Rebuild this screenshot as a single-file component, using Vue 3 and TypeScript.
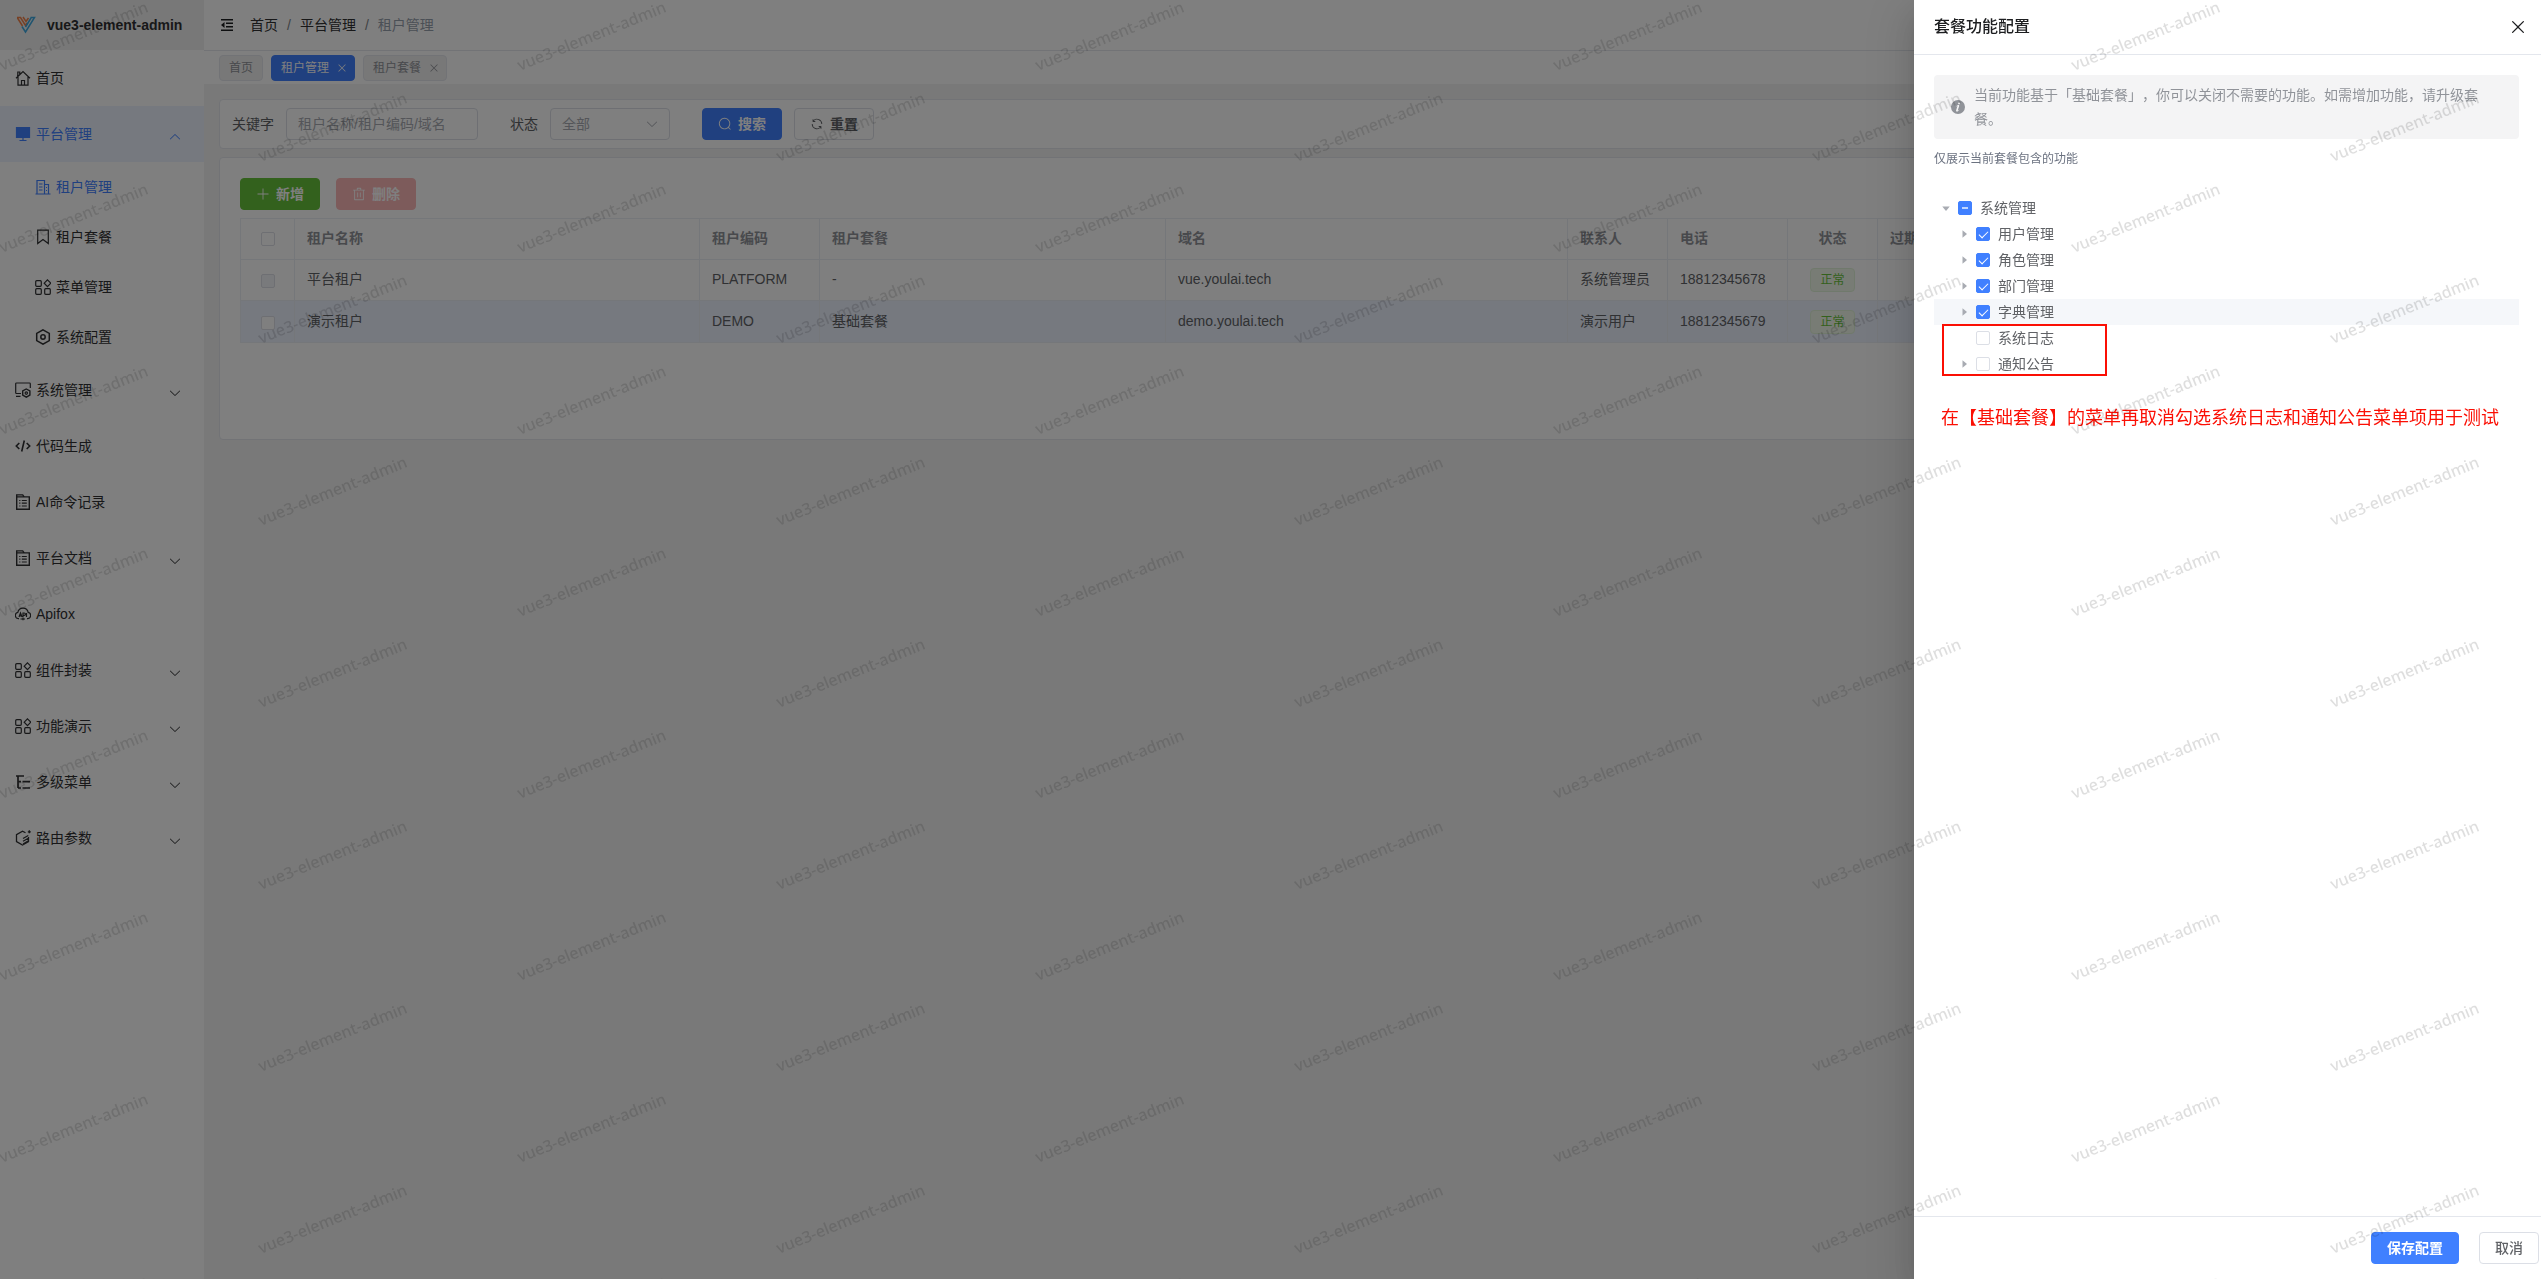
<script setup lang="ts">
import { ref } from 'vue'

interface MenuItem {
  label: string
  icon: string
  arrow?: boolean
  active?: boolean
  children?: { label: string; icon: string; active?: boolean }[]
}

const menu: MenuItem[] = [
  { label: '首页', icon: 'home' },
  {
    label: '平台管理', icon: 'monitor', arrow: true, active: true,
    children: [
      { label: '租户管理', icon: 'building', active: true },
      { label: '租户套餐', icon: 'bookmark' },
      { label: '菜单管理', icon: 'grid' },
      { label: '系统配置', icon: 'hexagon' },
    ],
  },
  { label: '系统管理', icon: 'system', arrow: true },
  { label: '代码生成', icon: 'code' },
  { label: 'AI命令记录', icon: 'document' },
  { label: '平台文档', icon: 'document', arrow: true },
  { label: 'Apifox', icon: 'api' },
  { label: '组件封装', icon: 'grid', arrow: true },
  { label: '功能演示', icon: 'grid', arrow: true },
  { label: '多级菜单', icon: 'levels', arrow: true },
  { label: '路由参数', icon: 'route', arrow: true },
]

/* Outline icons, 16 x 16 */
const icons: Record<string, string> = {
  home: '<path d="M1 8.300 8 1.500l7 6.800M3 7v8.200h10V7M2.800 6V2h2v2.200M6.500 15v-4.500h3V15" />',
  monitor: '<path fill="currentColor" d="M1.500 1.500h13v10h-13z" /><path d="M8 11.500v3M4.500 14.500h7" />',
  building: '<path d="M2 15V1.500h7.500V15M9.500 5.500h4V15M.5 15h15M4 5h3.500M4 8h3.500M4 11h3.500M11 8.500h1M11 11.500h1" />',
  bookmark: '<path d="M2.700 1.200h10.600v13.300L8 10.500l-5.300 4z" />',
  grid: '<rect x=".7" y="1.700" width="5.600" height="5.600" rx="1" /><rect x=".7" y="9.700" width="5.600" height="5.600" rx="1" /><rect x="9.700" y="9.700" width="5.600" height="5.600" rx="1" /><path d="m12.500.8 3.300 3.400-3.300 3.400-3.300-3.400z" />',
  hexagon: '<path stroke-width="1.500" d="m8 .8 6.300 3.600v7.200L8 15.200l-6.300-3.600V4.400z" /><circle cx="8" cy="8" r="2.200" stroke-width="1.500" />',
  system: '<path d="M6 11.500H1.500a.8.8 0 0 1-.8-.8V1.800A.8.8 0 0 1 1.500 1h13a.8.8 0 0 1 .8.800V6M1 14.300h4.500" /><path stroke-width="1.400" d="m11.300 7 3.600 2v4.200l-3.600 2-3.600-2V9z" /><circle cx="11.300" cy="11.100" r="1.200" />',
  code: '<path stroke-width="1.600" d="M4.300 5 1.300 8l3 3M11.700 5l3 3-3 3M9.300 2.500l-2.600 11" />',
  document: '<path stroke-width="1.400" d="M1.700 15.200V.9h6l1.500 2h5.100v12.300zM1.700 2.900h7.500" /><path d="M4.200 6.500h1.200M4.200 9.200h1.200M4.200 12h1.200M6.800 6.500h5M6.800 9.200h5M6.800 12h5" />',
  api: '<path d="M4 12.700H3.300A3.200 3.200 0 0 1 2.800 6.400 5.300 5.300 0 0 1 13.200 6.400a3.200 3.200 0 0 1-.5 6.300H12M4 11l1.500-4L7 11M4.500 9.800h2M8 11V7h1.200a1.200 1.200 0 0 1 0 2.400H8M11.500 7v4M8 11.500v2.700M5.500 13h2.500l2 0" />',
  levels: '<path stroke-width="1.700" d="M1 2h8M3 2v12M3 7.700h3M3 14h3M7.500 7.700H15M7.500 14H15" />',
  route: '<path stroke-width="1.300" d="M10.500 2.800 7.500 1.200 1.500 4.600v7l6 3.400 6-3.400V7M8 8.500l5.300-3M8 11.300l5.300-3M8 14l5-3M14.300.3v3M12.800 1.800h3" />',
}

const paths = {
  close: 'M764.288 214.592 512 466.88 259.712 214.592a31.936 31.936 0 0 0-45.12 45.12L466.752 512 214.528 764.224a31.936 31.936 0 1 0 45.12 45.184L512 557.184l252.288 252.288a31.936 31.936 0 0 0 45.12-45.12L557.12 512.064l252.288-252.352a31.936 31.936 0 1 0-45.12-45.184z',
  down: 'M831.872 340.864 512 652.672 192.128 340.864a30.592 30.592 0 0 0-42.752 0 29.12 29.12 0 0 0 0 41.6L489.664 714.24a32 32 0 0 0 44.672 0l340.288-331.712a29.12 29.12 0 0 0 0-41.728 30.592 30.592 0 0 0-42.752 0z',
  search: 'm795.904 750.72 124.992 124.928a32 32 0 0 1-45.248 45.248L750.656 795.904a416 416 0 1 1 45.248-45.248zM480 832a352 352 0 1 0 0-704 352 352 0 0 0 0 704',
  refresh: 'M771.776 794.88A384 384 0 0 1 128 512h64a320 320 0 0 0 555.712 216.448H654.72a32 32 0 1 1 0-64h149.056a32 32 0 0 1 32 32v148.928a32 32 0 1 1-64 0v-50.56zM276.288 295.616h92.992a32 32 0 0 1 0 64H220.16a32 32 0 0 1-32-32V178.56a32 32 0 0 1 64 0v50.56A384 384 0 0 1 896.128 512h-64a320 320 0 0 0-555.776-216.384z',
  plus: 'M480 480V128a32 32 0 0 1 64 0v352h352a32 32 0 1 1 0 64H544v352a32 32 0 1 1-64 0V544H128a32 32 0 0 1 0-64z',
  trash: 'M160 256H96a32 32 0 0 1 0-64h256V95.936a32 32 0 0 1 32-32h256a32 32 0 0 1 32 32V192h256a32 32 0 1 1 0 64h-64v672a32 32 0 0 1-32 32H192a32 32 0 0 1-32-32zm448-64v-64H416v64zM224 896h576V256H224zm192-128a32 32 0 0 1-32-32V416a32 32 0 0 1 64 0v320a32 32 0 0 1-32 32m192 0a32 32 0 0 1-32-32V416a32 32 0 0 1 64 0v320a32 32 0 0 1-32 32',
  caret: 'M384 192v640l384-320.064z',
  info: 'M512 64a448 448 0 1 1 0 896.064A448 448 0 0 1 512 64m67.2 275.072c33.28 0 60.288-23.104 60.288-57.344s-27.072-57.344-60.288-57.344c-33.28 0-60.16 23.104-60.16 57.344s26.88 57.344 60.16 57.344M590.912 699.2c0-6.848 2.368-24.64 1.024-34.752l-52.608 60.544c-10.88 11.456-24.512 19.392-30.912 17.28a12.992 12.992 0 0 1-8.256-14.72l87.68-276.992c7.168-35.136-12.544-67.2-54.336-71.296-44.096 0-108.992 44.736-148.48 101.504 0 6.784-1.28 23.68.064 33.792l52.544-60.608c10.88-11.328 23.552-19.328 29.952-17.152a12.8 12.8 0 0 1 7.808 16.128L388.48 728.576c-10.048 32.256 8.96 63.872 55.04 71.04 67.84 0 107.904-43.648 147.456-100.416z',
}

const tabs = [
  { label: '首页', closable: false, active: false },
  { label: '租户管理', closable: true, active: true },
  { label: '租户套餐', closable: true, active: false },
]

const tenants = [
  { name: '平台租户', code: 'PLATFORM', plan: '-', domain: 'vue.youlai.tech', contact: '系统管理员', phone: '18812345678', locked: true, current: false },
  { name: '演示租户', code: 'DEMO', plan: '基础套餐', domain: 'demo.youlai.tech', contact: '演示用户', phone: '18812345679', locked: false, current: true },
]

const granted = ref([
  { label: '用户管理', hover: false, checked: true },
  { label: '角色管理', hover: false, checked: true },
  { label: '部门管理', hover: false, checked: true },
  { label: '字典管理', hover: true, checked: true },
])
const revoked = ref([
  { label: '系统日志', leaf: true, checked: false },
  { label: '通知公告', leaf: false, checked: false },
])
</script>

<template>
  <div class="layout">
    <aside class="sidebar">
      <a class="logo" href="#">
        <svg class="logo-mark" viewBox="0 0 20 18">
          <path class="orange" d="M1 1.500h3.500l5 8 1.500-2.500M1.500 2l5 8M7 1l3 4.500L12.500 2" />
          <path class="blue" d="M14.500 1.500h4L9.500 16 6 10.500M15 2 9.500 11" />
        </svg>
        <span>vue3-element-admin</span>
      </a>
      <nav>
        <template v-for="item in menu" :key="item.label">
          <a class="menu-item" :class="{ active: item.active }" href="#">
            <svg class="menu-icon" viewBox="0 0 16 16" v-html="icons[item.icon]" />
            <span class="menu-label">{{ item.label }}</span>
            <svg v-if="item.arrow" class="menu-arrow" :class="{ open: item.active }" viewBox="0 0 1024 1024"><path :d="paths.down" /></svg>
          </a>
          <a v-for="sub in item.children" :key="sub.label" class="menu-item sub" :class="{ current: sub.active }" href="#">
            <svg class="menu-icon" viewBox="0 0 16 16" v-html="icons[sub.icon]" />
            <span class="menu-label">{{ sub.label }}</span>
          </a>
        </template>
      </nav>
    </aside>

    <div class="content">
      <header class="navbar">
        <button class="fold" type="button" aria-label="折叠菜单">
          <svg viewBox="0 0 12 12"><path d="M0 0h12v1.500H0zM5 3.500h7V5H5zM5 7h7v1.500H5zM0 10.500h12V12H0zM3.500 3v6L0 6z" /></svg>
        </button>
        <nav class="breadcrumb">
          <a href="#">首页</a><i>/</i><a href="#">平台管理</a><i>/</i><span>租户管理</span>
        </nav>
      </header>

      <div class="tabs">
        <a v-for="tab in tabs" :key="tab.label" class="tab" :class="{ active: tab.active, closable: tab.closable }" href="#">
          {{ tab.label }}
          <svg v-if="tab.closable" viewBox="0 0 1024 1024"><path :d="paths.close" /></svg>
        </a>
      </div>

      <main class="main">
        <form class="card search" @submit.prevent>
          <label for="keywords">关键字</label>
          <input id="keywords" class="field keyword" type="text" placeholder="租户名称/租户编码/域名" />
          <label class="status-label" for="status">状态</label>
          <div class="select-box">
            <select id="status" class="field"><option>全部</option></select>
            <svg viewBox="0 0 1024 1024"><path :d="paths.down" /></svg>
          </div>
          <button class="btn primary go" type="submit"><svg viewBox="0 0 1024 1024"><path :d="paths.search" /></svg>搜索</button>
          <button class="btn" type="reset"><svg viewBox="0 0 1024 1024"><path :d="paths.refresh" /></svg>重置</button>
        </form>

        <section class="card list">
          <div class="toolbar">
            <button class="btn success" type="button"><svg viewBox="0 0 1024 1024"><path :d="paths.plus" /></svg>新增</button>
            <button class="btn danger" type="button" disabled><svg viewBox="0 0 1024 1024"><path :d="paths.trash" /></svg>删除</button>
          </div>
          <table class="table">
            <colgroup>
              <col class="c-check" /><col class="c-name" /><col class="c-code" /><col class="c-plan" /><col class="c-domain" />
              <col class="c-contact" /><col class="c-code" /><col class="c-status" /><col />
            </colgroup>
            <thead>
              <tr>
                <th class="center"><input class="check" type="checkbox" aria-label="全选" /></th>
                <th>租户名称</th><th>租户编码</th><th>租户套餐</th><th>域名</th><th>联系人</th><th>电话</th>
                <th class="center">状态</th><th>过期时间</th>
              </tr>
            </thead>
            <tbody>
              <tr v-for="row in tenants" :key="row.code" :class="{ selected: row.current }">
                <td class="center"><input class="check" type="checkbox" :disabled="row.locked" :aria-label="row.name" /></td>
                <td>{{ row.name }}</td><td>{{ row.code }}</td><td>{{ row.plan }}</td><td>{{ row.domain }}</td>
                <td>{{ row.contact }}</td><td>{{ row.phone }}</td>
                <td class="center"><span class="tag">正常</span></td><td></td>
              </tr>
            </tbody>
          </table>
        </section>
      </main>
    </div>

    <div class="overlay">
      <section class="drawer" role="dialog" aria-labelledby="drawer-title">
        <header class="drawer-header">
          <h2 id="drawer-title">套餐功能配置</h2>
          <button class="drawer-close" type="button" aria-label="关闭"><svg viewBox="0 0 1024 1024"><path :d="paths.close" /></svg></button>
        </header>
        <div class="drawer-body">
          <div class="alert">
            <svg viewBox="0 0 1024 1024"><path :d="paths.info" /></svg>
            <p>当前功能基于「基础套餐」，你可以关闭不需要的功能。如需增加功能，请升级套餐。</p>
          </div>
          <p class="hint">仅展示当前套餐包含的功能</p>
          <div class="tree">
            <div class="node">
              <svg class="caret open" viewBox="0 0 1024 1024"><path :d="paths.caret" /></svg>
              <label><input class="check" type="checkbox" :indeterminate="true" />系统管理</label>
            </div>
            <div v-for="node in granted" :key="node.label" class="node child" :class="{ hover: node.hover }">
              <svg class="caret" viewBox="0 0 1024 1024"><path :d="paths.caret" /></svg>
              <label><input v-model="node.checked" class="check" type="checkbox" />{{ node.label }}</label>
            </div>
            <div class="marked">
              <div v-for="node in revoked" :key="node.label" class="node child">
                <svg class="caret" :class="{ leaf: node.leaf }" viewBox="0 0 1024 1024"><path :d="paths.caret" /></svg>
                <label><input v-model="node.checked" class="check" type="checkbox" />{{ node.label }}</label>
              </div>
            </div>
          </div>
          <p class="note">在【基础套餐】的菜单再取消勾选系统日志和通知公告菜单项用于测试</p>
        </div>
        <footer class="drawer-footer">
          <button class="btn primary" type="button">保存配置</button>
          <button class="btn plain" type="button">取消</button>
        </footer>
      </section>
    </div>

    <svg class="watermark" aria-hidden="true">
      <defs>
        <pattern id="mark" x="-20" y="-10" width="518" height="182" patternUnits="userSpaceOnUse">
          <text transform="translate(22 81) rotate(-22)">vue3-element-admin</text>
          <text transform="translate(281 172) rotate(-22)">vue3-element-admin</text>
        </pattern>
      </defs>
      <rect width="100%" height="100%" fill="url(#mark)" />
    </svg>
  </div>
</template>

<style>
body {
  margin: 0;
}
</style>

<style scoped>
*,
*::after {
  box-sizing: border-box;
}

.layout {
  display: flex;
  min-height: 100vh;
  overflow: hidden;
  background: #f3f3f3;
  color: #606266;
  font: 14px/20px "Liberation Sans", "Noto Sans CJK SC", sans-serif;
}

a {
  color: inherit;
  text-decoration: none;
}

button,
input,
select {
  font: inherit;
  color: inherit;
}

svg {
  fill: currentColor;
  flex: none;
}

/* Sidebar */
.sidebar {
  flex: none;
  width: 204px;
  background: #fff;
  color: #303133;
}

.logo {
  display: flex;
  align-items: center;
  gap: 11px;
  height: 50px;
  padding-left: 16px;
  background: #f0f0f0;
  font-weight: 700;
}

.logo-mark {
  width: 20px;
  height: 18px;
  fill: none;
  stroke-width: 1.5;
}

.logo-mark .orange {
  stroke: #f0824a;
}

.logo-mark .blue {
  stroke: #3fa9e0;
}

.menu-item {
  display: flex;
  align-items: center;
  gap: 5px;
  height: 56px;
  padding: 0 22px 0 15px;
}

.menu-item.sub {
  height: 50px;
  padding-left: 35px;
}

.menu-item.active {
  background: #ecf2ff;
}

.menu-item.active,
.menu-item.current {
  color: #4080ff;
}

.menu-icon {
  width: 16px;
  height: 16px;
  fill: none;
  stroke: currentColor;
  stroke-width: 1.2;
}

.menu-label {
  flex: 1;
}

.menu-arrow {
  width: 14px;
  height: 14px;
  margin-top: 6px;
}

.menu-arrow.open {
  transform: rotate(180deg);
}

/* Top bars */
.content {
  flex: 1;
  min-width: 0;
}

.navbar {
  display: flex;
  align-items: center;
  gap: 17px;
  height: 51px;
  padding-left: 17px;
  border-bottom: 1px solid #e4e7ed;
  background: #fff;
}

.fold {
  display: flex;
  padding: 0;
  border: 0;
  background: none;
  color: #1d1e20;
}

.fold svg {
  width: 12px;
  height: 12px;
}

.breadcrumb {
  display: flex;
  color: #303133;
}

.breadcrumb i {
  margin: 0 9px;
  color: #808389;
  font-style: normal;
}

.breadcrumb span {
  color: #97a0ac;
}

.tabs {
  display: flex;
  align-items: center;
  gap: 8px;
  height: 33px;
  padding-left: 15px;
  background: #fff;
}

.tab {
  display: flex;
  align-items: center;
  gap: 7px;
  height: 26px;
  padding: 0 9px;
  border: 1px solid #e4e7ed;
  border-radius: 4px;
  background: #f0f0f0;
  color: #909399;
  font-size: 12px;
}

.tab.closable {
  padding-right: 6px;
}

.tab svg {
  width: 12px;
  height: 12px;
}

.tab.active {
  border-color: #4080ff;
  background: #4080ff;
  color: #fff;
}

/* Main area */
.main {
  display: flex;
  flex-direction: column;
  gap: 8px;
  padding: 15px;
}

.card {
  border: 1px solid #e4e7ed;
  border-radius: 4px;
  background: #fff;
}

.search {
  display: flex;
  align-items: center;
  height: 50px;
  padding: 0 12px;
}

.search label {
  margin-right: 12px;
}

.search .status-label {
  margin-left: 32px;
}

.field {
  width: 100%;
  height: 32px;
  padding: 0 11px;
  border: 1px solid #dcdfe6;
  border-radius: 4px;
  background: #fff;
  color: #a8abb2;
  appearance: none;
}

.field::placeholder {
  color: #a8abb2;
}

.keyword {
  width: 192px;
}

.select-box {
  position: relative;
  width: 120px;
}

.select-box svg {
  position: absolute;
  top: 9px;
  right: 11px;
  width: 14px;
  height: 14px;
  color: #a8abb2;
}

.btn {
  display: inline-flex;
  align-items: center;
  gap: 6px;
  height: 32px;
  padding: 0 15px;
  border: 1px solid #dcdfe6;
  border-radius: 4px;
  background: #fff;
  font-weight: 700;
}

.btn svg {
  width: 14px;
  height: 14px;
}

.btn.primary {
  border-color: #4080ff;
  background: #4080ff;
  color: #fff;
}

.btn.success {
  border-color: #67c23a;
  background: #67c23a;
  color: #fff;
}

.btn.danger {
  border-color: #fab6b6;
  background: #fab6b6;
  color: #fff;
}

.btn.plain {
  font-weight: 500;
}

.btn.go {
  margin: 0 12px 0 32px;
}

.list {
  padding: 20px 20px 96px;
}

.toolbar {
  display: flex;
  gap: 16px;
  margin-bottom: 8px;
}

.table {
  width: 100%;
  border-collapse: collapse;
  table-layout: fixed;
}

.c-check {
  width: 54px;
}

.c-name {
  width: 405px;
}

.c-code {
  width: 120px;
}

.c-plan {
  width: 346px;
}

.c-domain {
  width: 402px;
}

.c-contact {
  width: 100px;
}

.c-status {
  width: 90px;
}

.table th,
.table td {
  height: 41px;
  padding: 0 12px 2px;
  border: 1px solid #ebeef5;
  text-align: left;
}

.table th {
  color: #909399;
}

.table .center {
  padding-bottom: 0;
  text-align: center;
}

.table th.center {
  padding-bottom: 2px;
}

.selected td {
  height: 42px;
  background: #ecf2ff;
}

.tag {
  display: inline-flex;
  align-items: center;
  height: 24px;
  padding: 0 9px;
  border: 1px solid #e1f3d8;
  border-radius: 4px;
  background: #f0f9eb;
  color: #67c23a;
  font-size: 12px;
}

.check {
  display: inline-grid;
  place-content: center;
  width: 14px;
  height: 14px;
  margin: 0;
  border: 1px solid #dcdfe6;
  border-radius: 2px;
  background: #fff;
  vertical-align: middle;
  appearance: none;
}

.check:disabled {
  background: #f2f4f8;
}

.check:checked,
.check:indeterminate {
  border-color: #4080ff;
  background: #4080ff;
}

.check:checked::after {
  width: 5px;
  height: 9px;
  margin-bottom: 2px;
  border: solid #fff;
  border-width: 0 1px 1px 0;
  content: "";
  transform: rotate(45deg);
}

.check:indeterminate::after {
  width: 6px;
  height: 2px;
  background: #c0d6ff;
  content: "";
}

/* Drawer */
.overlay {
  position: fixed;
  inset: 0;
  display: flex;
  justify-content: flex-end;
  background: rgba(0, 0, 0, 0.5);
}

.drawer {
  display: flex;
  flex-direction: column;
  width: 627px;
  background: #fff;
  box-shadow: 0 16px 48px 16px rgba(0, 0, 0, 0.08), 0 12px 32px rgba(0, 0, 0, 0.12), 0 8px 16px -8px rgba(0, 0, 0, 0.16);
}

.drawer-header {
  display: flex;
  align-items: center;
  justify-content: space-between;
  height: 55px;
  padding: 0 13px 0 20px;
  border-bottom: 1px solid #e4e7ed;
  color: #1d1e20;
}

.drawer-header h2 {
  margin: 0;
  font-size: 16px;
  font-weight: 500;
}

.drawer-close {
  display: flex;
  padding: 0;
  border: 0;
  background: none;
}

.drawer-close svg {
  width: 20px;
  height: 20px;
}

.drawer-body {
  flex: 1;
  padding: 20px 22px 20px 20px;
}

.alert {
  display: flex;
  align-items: center;
  gap: 8px;
  padding: 8px 40px 8px 16px;
  border-radius: 4px;
  background: #f4f4f5;
  color: #909399;
}

.alert svg {
  width: 16px;
  height: 16px;
}

.alert p {
  margin: 0;
  line-height: 24px;
  text-spacing-trim: space-all;
}

.hint {
  margin: 10px 0 26px;
  color: #6b7280;
  font-size: 12px;
}

.node {
  display: flex;
  align-items: center;
  height: 26px;
}

.node.child {
  padding-left: 18px;
}

.node.hover {
  background: #f5f7fa;
}

.node label {
  display: flex;
  align-items: center;
  gap: 8px;
}

.caret {
  width: 12px;
  height: 12px;
  margin: 0 6px;
  color: #a8abb2;
}

.caret.open {
  transform: rotate(90deg);
}

.caret.leaf {
  visibility: hidden;
}

.marked {
  position: relative;
}

.marked::after {
  position: absolute;
  top: -1px;
  bottom: 1px;
  left: 8px;
  width: 165px;
  border: 2px solid #fb0f04;
  content: "";
}

.note {
  margin: 29px 0 0 7px;
  color: #fb0f04;
  font-size: 18px;
  line-height: 24px;
  white-space: nowrap;
}

.drawer-footer {
  display: flex;
  justify-content: flex-end;
  gap: 20px;
  padding: 15px 2px 15px 20px;
  border-top: 1px solid #e4e7ed;
}

.watermark {
  position: fixed;
  inset: 0;
  width: 100%;
  height: 100%;
  pointer-events: none;
}

.watermark text {
  fill: rgba(0, 0, 0, 0.13);
  font: 500 16px "Noto Sans", sans-serif;
}
</style>
